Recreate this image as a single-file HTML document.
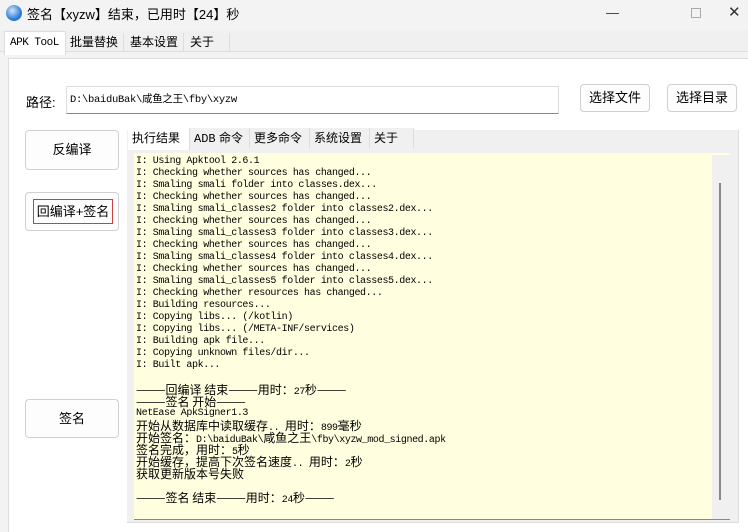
<!DOCTYPE html>
<html><head><meta charset="utf-8"><style>
*{margin:0;padding:0;box-sizing:border-box}
body{width:748px;height:532px;background:#f3f3f3;font-family:"Liberation Sans","Noto Sans CJK SC",sans-serif;font-size:12px;color:#000;position:relative;overflow:hidden}
.a{position:absolute}
.btn{position:absolute;background:#fdfdfd;border:1px solid #d0d0d0;border-radius:4px;text-align:center;font-size:13px}
.tab{position:absolute;top:0;height:20px;line-height:20px;font-size:12px;padding-left:4px;border-right:1px solid #ddd;background:#f0f0f0}
.log{font-family:"Liberation Mono","Noto Sans CJK SC",monospace;font-size:10px;letter-spacing:-0.4px}
.log div{height:12px;line-height:12px;white-space:pre;overflow:visible}
.log span{font-family:"Noto Sans CJK SC",sans-serif;font-size:12px;letter-spacing:0;line-height:12px;vertical-align:baseline}
</style></head><body>
<div class="a" style="left:0;top:0;width:748px;height:26px;background:#f3f3f3"></div>
<div class="a" style="left:6px;top:5px;width:16px;height:16px;border-radius:50%;background:radial-gradient(circle at 40% 35%,#cfe6ff,#2f7fd6 60%,#1f5aa8)"></div>
<div class="a" style="left:27px;top:4px;font-size:13px">签名【xyzw】结束，已用时【24】秒</div>
<div class="a" style="left:606px;top:5px;font-size:13px;color:#333">—</div>
<div class="a" style="left:691px;top:8px;width:10px;height:10px;border:1px solid #aaa"></div>
<div class="a" style="left:728px;top:3px;font-size:15px;color:#333">✕</div>
<div class="a" style="left:0;top:30px;width:748px;height:22px;background:#f0f0f0;border-bottom:1px solid #ddd"></div>
<div class="a" style="left:4px;top:31px;width:62px;height:24px;background:#fff;border:1px solid #ddd;border-bottom:none;font-family:'Liberation Mono';font-size:11px;line-height:22px;padding-left:5px;white-space:nowrap;letter-spacing:-0.5px">APK TooL</div>
<div class="a" style="left:66px;top:33px;width:58px;font-size:12px;line-height:18px;padding-left:4px;border-right:1px solid #ddd">批量替换</div>
<div class="a" style="left:126px;top:33px;width:58px;font-size:12px;line-height:18px;padding-left:4px;border-right:1px solid #ddd">基本设置</div>
<div class="a" style="left:186px;top:33px;width:44px;font-size:12px;line-height:18px;padding-left:4px;border-right:1px solid #ddd">关于</div>
<div class="a" style="left:8px;top:58px;width:740px;height:474px;background:#fff;border-left:1px solid #ddd;border-top:1px solid #ddd"></div>
<div class="a" style="left:26px;top:92px;font-size:13px">路径:</div>
<div class="a" style="left:66px;top:86px;width:493px;height:28px;border:1px solid #ddd;border-bottom:1px solid #888;font-family:'Liberation Mono','Noto Sans CJK SC';font-size:10.5px;letter-spacing:-0.3px;line-height:26px;padding-left:3px">D:\baiduBak\咸鱼之王\fby\xyzw</div>
<div class="btn" style="left:580px;top:84px;width:70px;height:28px;line-height:26px">选择文件</div>
<div class="btn" style="left:667px;top:84px;width:70px;height:28px;line-height:26px">选择目录</div>
<div class="btn" style="left:25px;top:130px;width:94px;height:40px;line-height:38px">反编译</div>
<div class="btn" style="left:25px;top:192px;width:94px;height:39px"><div class="a" style="left:7px;top:6px;width:80px;height:25px;border:1px solid #c84040;line-height:23px">回编译+签名</div></div>
<div class="btn" style="left:25px;top:399px;width:94px;height:39px;line-height:37px">签名</div>
<div class="a" style="left:127px;top:130px;width:612px;height:393px;background:#f0f0f0;border-right:1px solid #ddd;border-bottom:1px solid #ddd"></div>
<div class="a" style="left:127px;top:128px;width:612px;height:22px">
<div class="tab" style="left:1px;width:62px;background:#fff;height:22px">执行结果</div>
<div class="tab" style="left:63px;width:60px"><span style="font-family:'Liberation Mono'">ADB</span> 命令</div>
<div class="tab" style="left:123px;width:60px">更多命令</div>
<div class="tab" style="left:183px;width:60px">系统设置</div>
<div class="tab" style="left:243px;width:44px">关于</div>
</div>
<div class="a" style="left:134px;top:153px;width:596px;height:367px;background:#ffffe0;border-bottom:1px solid #888"></div>
<div class="a" style="left:712px;top:155px;width:18px;height:364px;background:#f0f0f0"></div>
<div class="a" style="left:719px;top:183px;width:2px;height:317px;background:#888"></div>
<div class="a log" style="left:136px;top:156px">
<div>I: Using Apktool 2.6.1</div>
<div>I: Checking whether sources has changed...</div>
<div>I: Smaling smali folder into classes.dex...</div>
<div>I: Checking whether sources has changed...</div>
<div>I: Smaling smali_classes2 folder into classes2.dex...</div>
<div>I: Checking whether sources has changed...</div>
<div>I: Smaling smali_classes3 folder into classes3.dex...</div>
<div>I: Checking whether sources has changed...</div>
<div>I: Smaling smali_classes4 folder into classes4.dex...</div>
<div>I: Checking whether sources has changed...</div>
<div>I: Smaling smali_classes5 folder into classes5.dex...</div>
<div>I: Checking whether resources has changed...</div>
<div>I: Building resources...</div>
<div>I: Copying libs... (/kotlin)</div>
<div>I: Copying libs... (/META-INF/services)</div>
<div>I: Building apk file...</div>
<div>I: Copying unknown files/dir...</div>
<div>I: Built apk...</div>
<div></div>
<div><span>———回编译 结束———用时：</span>27<span>秒———</span></div>
<div><span>———签名 开始———</span></div>
<div>NetEase ApkSigner1.3</div>
<div><span>开始从数据库中读取缓存</span>.. <span>用时：</span>899<span>毫秒</span></div>
<div><span>开始签名：</span>D:\baiduBak\<span>咸鱼之王</span>\fby\xyzw_mod_signed.apk</div>
<div><span>签名完成，用时：</span>5<span>秒</span></div>
<div><span>开始缓存，提高下次签名速度</span>.. <span>用时：</span>2<span>秒</span></div>
<div><span>获取更新版本号失败</span></div>
<div></div>
<div><span>———签名 结束———用时：</span>24<span>秒———</span></div>
</div>
</body></html>
